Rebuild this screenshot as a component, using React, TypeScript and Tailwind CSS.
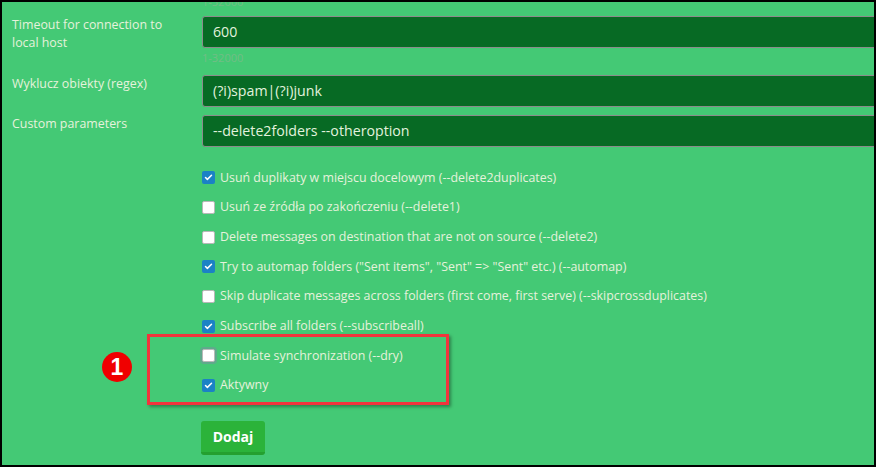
import { Check } from "lucide-react"

type Option = {
  label: string
  checked: boolean
  focused?: boolean
}

const options: Option[] = [
  { label: "Usuń duplikaty w miejscu docelowym (--delete2duplicates)", checked: true },
  { label: "Usuń ze źródła po zakończeniu (--delete1)", checked: false },
  { label: "Delete messages on destination that are not on source (--delete2)", checked: false },
  { label: 'Try to automap folders ("Sent items", "Sent" => "Sent" etc.) (--automap)', checked: true },
  { label: "Skip duplicate messages across folders (first come, first serve) (--skipcrossduplicates)", checked: false },
  { label: "Subscribe all folders (--subscribeall)", checked: true },
  { label: "Simulate synchronization (--dry)", checked: false, focused: true },
  { label: "Aktywny", checked: true },
]

function Field({ label, value, className = "" }: { label: React.ReactNode; value: string; className?: string }) {
  return (
    <div className={`flex h-[32px] ${className}`}>
      <div className="w-[190px] shrink-0 text-[12.4px] leading-[18px] text-[#e6f2dc]">{label}</div>
      <div className="h-[32px] w-[700px] shrink-0 rounded-[3px] border border-[#8c8c8c] bg-[#076a24] pl-[10px] text-[14.2px] leading-[30px] text-[#e2f2de]">
        {value}
      </div>
    </div>
  )
}

function Hint({ className = "" }: { className?: string }) {
  return <div className={`pl-[190px] text-[11px] leading-[14px] text-[#72bd86] ${className}`}>1-32000</div>
}

function Checkbox({ checked, focused }: { checked: boolean; focused?: boolean }) {
  if (checked) {
    return (
      <span className="flex h-[13px] w-[13px] items-center justify-center rounded-[2px] bg-[#1b82c5]">
        <Check className="h-[9px] w-[9px] text-white" strokeWidth={4} />
      </span>
    )
  }
  return (
    <span
      className={`block h-[13px] w-[13px] rounded-[2px] border border-[#b8b8b8] bg-white ${
        focused ? "shadow-[0_0_0_2px_#5faa8c]" : ""
      }`}
    />
  )
}

export default function App() {
  return (
    <div className="relative h-[467px] w-[876px] overflow-hidden border-2 border-black bg-[#44c975] font-['Open_Sans',sans-serif]">
      <div className="pl-[10px]">
        <Hint className="-mt-[7px]" />
        <Field
          className="mt-[7px]"
          label={
            <>
              Timeout for connection to
              <br />
              local host
            </>
          }
          value="600"
        />
        <Hint className="mt-[3px]" />
        <Field className="mt-[10px]" label="Wyklucz obiekty (regex)" value="(?i)spam|(?i)junk" />
        <Field className="mt-[8px]" label="Custom parameters" value="--delete2folders --otheroption" />

        <div className="mt-[16px] pl-[190px]">
          {options.map((o) => (
            <div key={o.label} className="flex h-[29.7px] items-center gap-[5px]">
              <Checkbox checked={o.checked} focused={o.focused} />
              <span className="text-[12.4px] text-[#e6f2dc]">{o.label}</span>
            </div>
          ))}
        </div>

        <div className="mt-[20px] pl-[189px]">
          <button className="h-[34px] w-[64px] rounded-[3px] border-b-[3px] border-[#24a02f] bg-[#2bb33a] text-[14px] font-bold text-white">
            Dodaj
          </button>
        </div>
      </div>

      {/* annotation */}
      <div className="absolute left-[145px] top-[332px] h-[71px] w-[302px] border-[3px] border-[#f2343c] shadow-[2px_2px_3px_rgba(0,0,0,0.35)]" />
      <div className="absolute left-[100px] top-[350px] flex h-[30px] w-[30px] items-center justify-center rounded-full bg-[#f00000] text-[23px] font-bold text-white font-['Liberation_Sans',sans-serif]">
        1
      </div>
    </div>
  )
}
